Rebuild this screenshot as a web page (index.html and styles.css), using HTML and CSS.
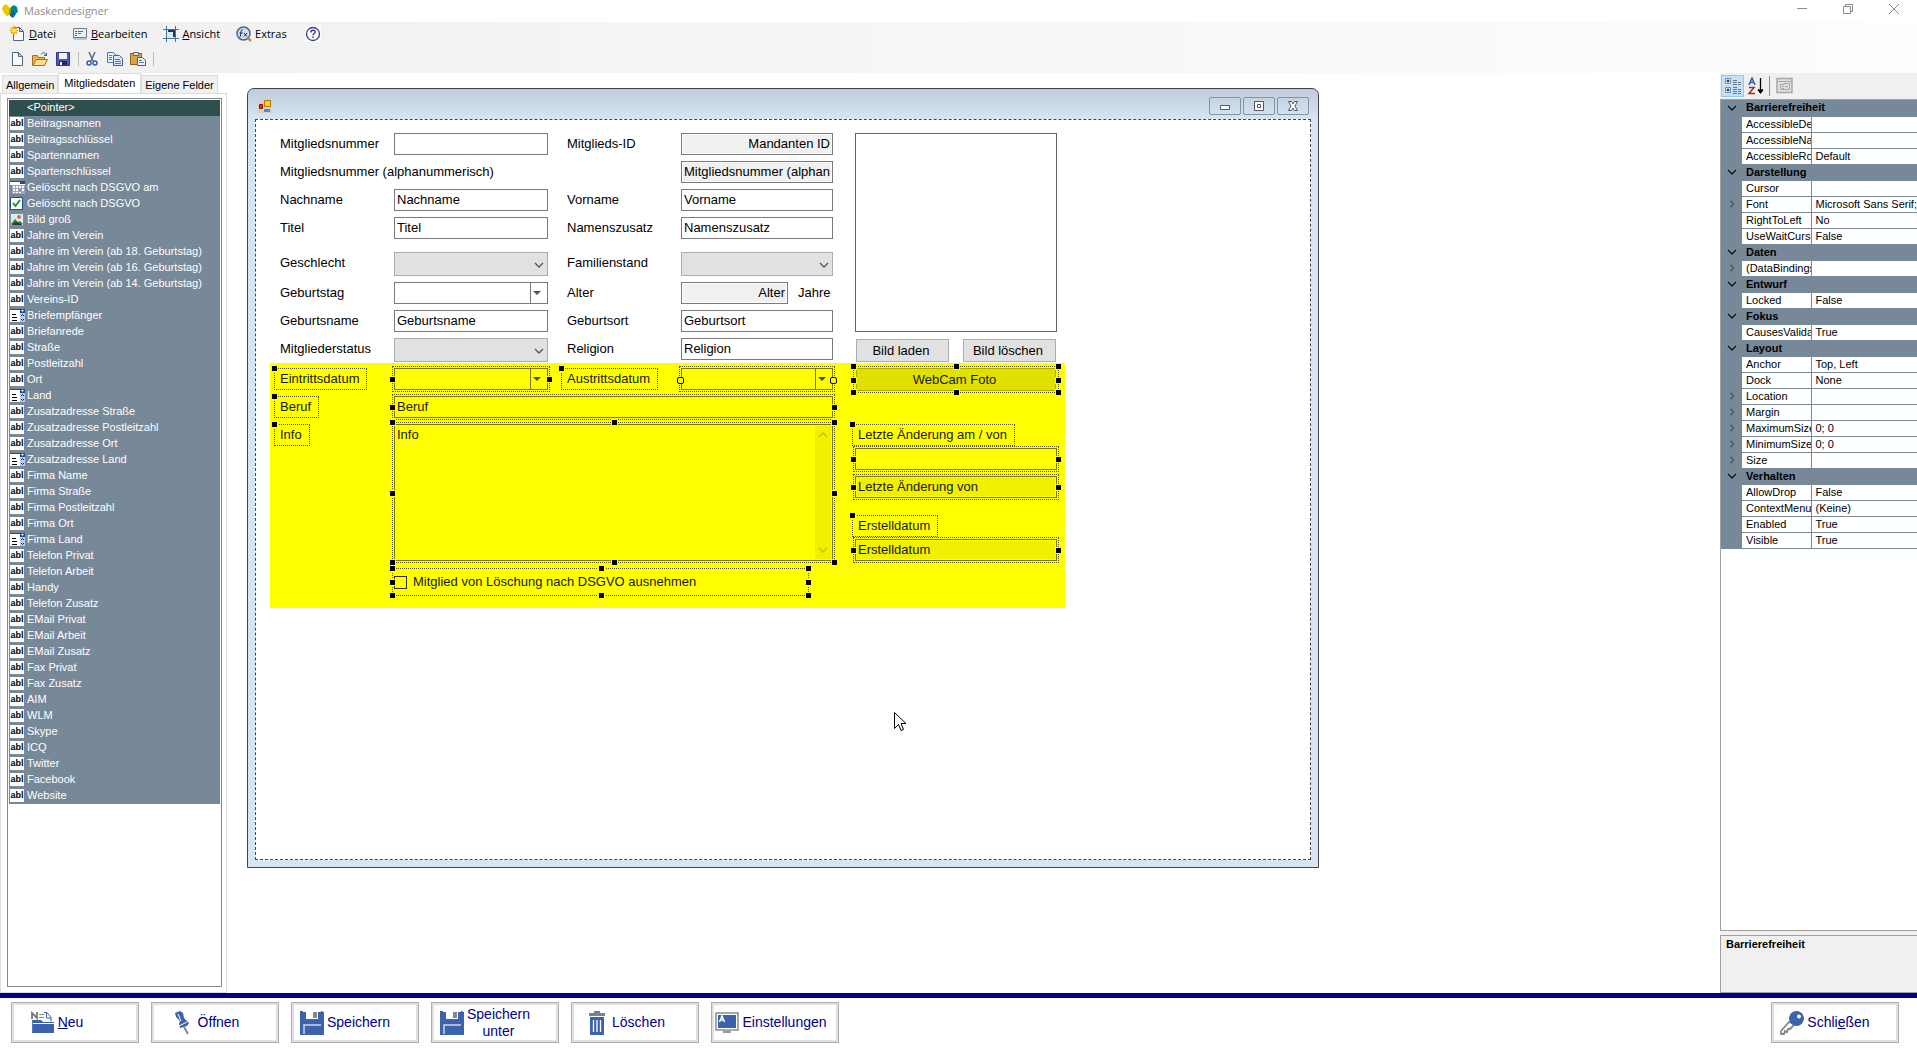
FILE: index.html
```
<!DOCTYPE html>
<html lang="de">
  <head>
    <meta charset="UTF-8" />
    <meta name="viewport" content="width=device-width, initial-scale=1.0" />
    <title>Maskendesigner</title>
    <link rel="stylesheet" href="styles.css">
  </head>
  <body>
    <!-- shared icons -->
    <svg class="sprite" width="0" height="0" aria-hidden="true">
      <symbol id="combo" viewBox="0 0 15 13">
        <path fill="#fff" d="M0 1h10v12H0z" />
        <path fill="#b4cdf0" d="M10 4h5v9h-5z" />
        <path fill="#1f4e87" d="M0 0h15v1H0zM10 1h5v3h-5z" />
        <path fill="#fff" d="M11 1h3l-1.500 2z" />
        <path stroke="#000" d="M2 5.500h4M2 8.500h5M2 11.500h5" />
        <path fill="none" stroke="#223" d="M11 7l1.500-1.500L14 7M11 10l1.500 1.500L14 10" />
      </symbol>
      <symbol id="calendar" viewBox="0 0 15 13">
        <path fill="#fff" d="M0 1h15v12H2V4H0z" />
        <path fill="#1f4e87" d="M0 0h15v1H0zM10 1h5v2h-5z" />
        <path fill="#8fa9d0" d="M2 4h13v9H2z" />
        <path fill="#fff" d="M3 5h2v2H3zM6 5h2v2H6zM9 5h2v2H9zM12 5h2v2h-2zM3 8h2v2H3zM6 8h2v2H6zM12 8h2v2h-2zM3 11h2v1H3zM6 11h2v1H6zM9 11h2v1H9z" />
        <path fill="#e2714c" d="M9 8h2v2H9z" />
      </symbol>
      <symbol id="tick" viewBox="0 0 15 13">
        <path fill="#fff" stroke="#1f4e87" d="M.5.5h12v12H.5z" />
        <path fill="none" stroke="#1d9a31" stroke-width="2" d="M3 6l2.500 3L10 3" />
      </symbol>
      <symbol id="picture" viewBox="0 0 15 13">
        <path fill="#d8ecfb" stroke="#7a8fa5" d="M.5.5h13v12H.5z" />
        <path fill="#3b7d3a" d="M1 11l4-5 3 3 2-1 3 3z" />
        <circle cx="9" cy="4" r="2" fill="#e46b32" />
        <path fill="#333" d="M1 12l5-3 7 3z" />
      </symbol>
      <symbol id="down" viewBox="0 0 10 6">
        <path fill="none" stroke="currentColor" stroke-width="1.300" d="M1 1l4 4 4-4" />
      </symbol>
      <symbol id="right" viewBox="0 0 6 10">
        <path fill="none" stroke="currentColor" stroke-width="1.600" d="M1 1l4 4-4 4" />
      </symbol>
      <symbol id="page" viewBox="0 0 16 16">
        <path fill="#f7fbff" stroke="#55657d" d="M3.500 1.500h6l4 4v9h-10z" />
        <path fill="#c5d5ea" stroke="#55657d" d="M9.500 1.500v4h4z" />
      </symbol>
      <symbol id="disk" viewBox="0 0 24 24">
        <path fill="#3c62ae" d="M1 0h2v9h18V0h1l2 2v22H0V0z" />
        <path fill="#3c62ae" d="M0 8h24v16H0zM0 1h6v9H0zM18 1h6v9h-6z" />
        <path fill="#fff" d="M6 0h12v8H6z" />
        <path fill="#868686" d="M13 1h4v6h-4z" />
        <path fill="none" stroke="#cdd3df" stroke-width="1.500" d="M4 23v-9h17" />
      </symbol>
    </svg>

    <header>
      <div class="titlebar">
        <svg width="16" height="16" viewBox="0 0 16 16">
          <path fill="#f5c400" d="M1 3l3-2 2 2 2 2-1 3 1 4-3 1-3-3-2-4z" />
          <path fill="#00858d" d="M9 4l3-2 3 2 1 5-3 2-4-2z" />
          <path fill="#0a5fa8" d="M8 9l3-1 3 3-3 4-3-2z" />
          <path fill="#6fae2b" d="M7 6l2-2v6l-2 2z" />
        </svg>
        <h1>Maskendesigner</h1>
        <button aria-label="Minimieren"><svg width="12" height="12"><path d="M1 5.500h10" /></svg></button>
        <button aria-label="Wiederherstellen"><svg width="12" height="12"><path d="M1.500 3.500h7v7h-7zM3.500 3V1.500h7v7H9" /></svg></button>
        <button aria-label="Schließen"><svg width="12" height="12"><path d="M1 1l10 10M11 1L1 11" /></svg></button>
      </div>

      <div class="bars">
        <nav class="menu">
          <button>
            <svg width="16" height="16"><use href="#page" /><path stroke="#f5a800" stroke-width="1.500" d="M4 0v9M0 4.500h8M1 1.500l6 6M7 1.500l-6 6" /><circle cx="4" cy="4.500" r="2" fill="#ffe36b" /></svg>
            <span><u>D</u>atei</span>
          </button>
          <button>
            <svg width="16" height="16"><path fill="#e9f1f9" stroke="#6b7c92" d="M1.500 2.500h13v9h-13z" /><path stroke="#54677f" d="M3 5.500h2M6 5.500h5M3 7.500h2M6 7.500h3M3 9.500h2" /><path fill="#b9c6d6" d="M0 12h15v2H2z" /></svg>
            <span><u>B</u>earbeiten</span>
          </button>
          <button>
            <svg width="16" height="16"><path fill="#dfeaf5" d="M4 4h8v8H4z" /><path fill="none" stroke="#3e74a8" d="M0 3.500h16M0 12.500h16M3.500 0v16M12.500 0v16" /><path fill="none" stroke="#17365c" stroke-width="2" d="M5 5h6v6" /></svg>
            <span><u>A</u>nsicht</span>
          </button>
          <button>
            <svg width="16" height="16"><circle cx="7.500" cy="7.500" r="6.500" fill="#cfe0f2" stroke="#4c6a8d" stroke-width="1.500" /><path stroke="#d08b2d" stroke-width="2.500" d="M12 12l3 3" /><path fill="none" stroke="#1b2c44" d="M7 4c-2-.5-2 1-2.500 6l-1 1M3.500 7h3M8 7l3 3.500M11 7l-3 3.500" /></svg>
            <span>Extras</span>
          </button>
          <button class="help" aria-label="Hilfe">
            <svg width="16" height="16"><path fill="#fff" d="M0 0h16v16H0z" /><circle cx="8" cy="8" r="6.500" fill="none" stroke="#3b3b8f" stroke-width="1.300" /><path fill="none" stroke="#3b3b8f" stroke-width="1.500" d="M5.800 6.500c0-3 4.400-3 4.400-.5 0 1.500-2.200 1.500-2.200 3.300M8 10.500V12" /></svg>
          </button>
        </nav>
        <div class="toolbar">
          <button aria-label="Neu"><svg width="16" height="16"><use href="#page" /></svg></button>
          <button aria-label="Öffnen"><svg width="16" height="16"><path fill="#e9b64b" stroke="#9c741f" d="M.5 14.500v-10h5l1 2h6v2" /><path fill="#ffdf8a" stroke="#9c741f" d="M1 14.500l3-6h11.500l-3 6z" /><path fill="none" stroke="#47617f" d="M9 3.500c2-3 4-2 5 .5M12 4.500h2.500V2" /></svg></button>
          <button aria-label="Speichern"><svg width="16" height="16"><path fill="#4c55c4" stroke="#31378f" d="M1.500 1.500h13v13h-13z" /><path fill="#f3f5fc" d="M4 2h8v6H4z" /><path fill="#23284f" d="M4 10h8v4H4z" /><path fill="#fff" d="M5 11h2v3H5z" /></svg></button>
          <i class="sep"></i>
          <button aria-label="Ausschneiden"><svg width="16" height="16"><path stroke="#5b6b80" stroke-width="1.500" d="M5 1l4 9M11 1L7 10" /><circle cx="5" cy="12" r="2" fill="none" stroke="#2f5fb5" stroke-width="1.500" /><circle cx="11" cy="12" r="2" fill="none" stroke="#2f5fb5" stroke-width="1.500" /></svg></button>
          <button aria-label="Kopieren"><svg width="16" height="16"><path fill="#eef5fd" stroke="#5276ad" d="M.5 1.500h6l3 3v7h-9z" /><path fill="#dbe9fa" stroke="#3c64a0" d="M6.500 4.500h6l3 3v7h-9z" /><path stroke="#5276ad" d="M2 4.500h3M2 6.500h3M2 8.500h3M8 8.500h5M8 10.500h6M8 12.500h6" /></svg></button>
          <button aria-label="Einfügen"><svg width="16" height="16"><path fill="#dca24a" stroke="#8c5f1d" d="M.5 2.500h11v11H.5z" /><path fill="#e5e5e5" stroke="#666" d="M3.500 1.500h5v3h-5z" /><path fill="#eef5fd" stroke="#4a5f80" d="M7.500 6.500h5l3 3v5h-8z" /><path stroke="#5276ad" d="M9 9.500h3M9 11.500h5" /></svg></button>
          <i class="sep"></i>
        </div>
      </div>
    </header>

    <main>
      <aside class="toolbox">
        <div class="tabs">
          <button>Allgemein</button>
          <button class="on">Mitgliedsdaten</button>
          <button>Eigene Felder</button>
        </div>
        <div class="tabpage">
          <ul class="fields">
            <li class="on"><i></i>&lt;Pointer&gt;</li>
            <li><b>abl</b>Beitragsnamen</li>
            <li><b>abl</b>Beitragsschlüssel</li>
            <li><b>abl</b>Spartennamen</li>
            <li><b>abl</b>Spartenschlüssel</li>
            <li><svg><use href="#calendar" /></svg>Gelöscht nach DSGVO am</li>
            <li><svg><use href="#tick" /></svg>Gelöscht nach DSGVO</li>
            <li><svg><use href="#picture" /></svg>Bild groß</li>
            <li><b>abl</b>Jahre im Verein</li>
            <li><b>abl</b>Jahre im Verein (ab 18. Geburtstag)</li>
            <li><b>abl</b>Jahre im Verein (ab 16. Geburtstag)</li>
            <li><b>abl</b>Jahre im Verein (ab 14. Geburtstag)</li>
            <li><b>abl</b>Vereins-ID</li>
            <li><svg><use href="#combo" /></svg>Briefempfänger</li>
            <li><b>abl</b>Briefanrede</li>
            <li><b>abl</b>Straße</li>
            <li><b>abl</b>Postleitzahl</li>
            <li><b>abl</b>Ort</li>
            <li><svg><use href="#combo" /></svg>Land</li>
            <li><b>abl</b>Zusatzadresse Straße</li>
            <li><b>abl</b>Zusatzadresse Postleitzahl</li>
            <li><b>abl</b>Zusatzadresse Ort</li>
            <li><svg><use href="#combo" /></svg>Zusatzadresse Land</li>
            <li><b>abl</b>Firma Name</li>
            <li><b>abl</b>Firma Straße</li>
            <li><b>abl</b>Firma Postleitzahl</li>
            <li><b>abl</b>Firma Ort</li>
            <li><svg><use href="#combo" /></svg>Firma Land</li>
            <li><b>abl</b>Telefon Privat</li>
            <li><b>abl</b>Telefon Arbeit</li>
            <li><b>abl</b>Handy</li>
            <li><b>abl</b>Telefon Zusatz</li>
            <li><b>abl</b>EMail Privat</li>
            <li><b>abl</b>EMail Arbeit</li>
            <li><b>abl</b>EMail Zusatz</li>
            <li><b>abl</b>Fax Privat</li>
            <li><b>abl</b>Fax Zusatz</li>
            <li><b>abl</b>AIM</li>
            <li><b>abl</b>WLM</li>
            <li><b>abl</b>Skype</li>
            <li><b>abl</b>ICQ</li>
            <li><b>abl</b>Twitter</li>
            <li><b>abl</b>Facebook</li>
            <li><b>abl</b>Website</li>
          </ul>
        </div>
      </aside>

      <section class="workspace">
        <div class="window">
          <div class="window-title">
            <svg width="14" height="14"><path fill="#d4d0c8" d="M0 0h14v14H0z" /><path fill="#ffc62e" stroke="#b07a00" d="M6.500 1.500h6v6h-6z" /><path fill="#d8352a" stroke="#8c120b" d="M1.500 5.500h3v4h-3z" /><path fill="#4b86e0" d="M6 10h6v3H6z" /></svg>
            <button aria-label="Minimieren"><svg width="12" height="12"><path d="M1.500 5.500h9v4h-9z" /></svg></button>
            <button aria-label="Maximieren"><svg width="12" height="12"><path d="M1.500 1.500h9v9h-9zM4.500 4.500h3v3h-3z" /></svg></button>
            <button aria-label="Schließen"><svg width="12" height="12"><path d="M1.500 1.500h3L6 4l1.500-2.500h3L8 6l2.500 4.500h-3L6 8l-1.500 2.500h-3L4 6z" /></svg></button>
          </div>

          <form class="client">
            <div class="grid top">
              <label for="nr">Mitgliedsnummer</label>
              <input id="nr" type="text">
              <label for="mid">Mitglieds-ID</label>
              <input id="mid" class="narrow right" type="text" value="Mandanten ID" readonly>
              <div class="photo"></div>

              <label class="wide" for="alpha">Mitgliedsnummer (alphanummerisch)</label>
              <input id="alpha" class="narrow" type="text" value="Mitgliedsnummer (alphanummerisch)" readonly>

              <label for="nachname">Nachname</label>
              <input id="nachname" type="text" value="Nachname">
              <label for="vorname">Vorname</label>
              <input id="vorname" class="narrow" type="text" value="Vorname">

              <label for="titel">Titel</label>
              <input id="titel" type="text" value="Titel">
              <label for="zusatz">Namenszusatz</label>
              <input id="zusatz" class="narrow" type="text" value="Namenszusatz">

              <label for="geschlecht">Geschlecht</label>
              <div class="combo"><select id="geschlecht" disabled></select><svg><use href="#down" /></svg></div>
              <label for="stand">Familienstand</label>
              <div class="combo narrow"><select id="stand" disabled></select><svg><use href="#down" /></svg></div>

              <label for="geburtstag">Geburtstag</label>
              <div class="date"><input id="geburtstag" type="text"><button type="button" aria-label="Kalender"></button></div>
              <label for="alter">Alter</label>
              <div class="age"><input id="alter" class="right" type="text" value="Alter" readonly><span>Jahre</span></div>

              <label for="gname">Geburtsname</label>
              <input id="gname" type="text" value="Geburtsname">
              <label for="gort">Geburtsort</label>
              <input id="gort" class="narrow" type="text" value="Geburtsort">

              <label for="status">Mitgliederstatus</label>
              <div class="combo"><select id="status" disabled></select><svg><use href="#down" /></svg></div>
              <label for="religion">Religion</label>
              <input id="religion" class="narrow" type="text" value="Religion">
              <div class="photo-buttons">
                <button type="button">Bild laden</button>
                <button type="button">Bild löschen</button>
              </div>
            </div>

            <!-- selected controls -->
            <div class="grid marked">
              <label class="tag" for="eintritt">Eintrittsdatum<i class="grip t l"></i></label>
              <div class="sel">
                <div class="date"><input id="eintritt" type="text"><button type="button" aria-label="Kalender"></button></div>
                <i class="grip m l"></i><i class="grip m r"></i>
              </div>
              <label class="tag" for="austritt">Austrittsdatum<i class="grip t l"></i></label>
              <div class="sel primary">
                <div class="date"><input id="austritt" type="text"><button type="button" aria-label="Kalender"></button></div>
                <i class="grip m l"></i><i class="grip m r"></i>
              </div>
              <div class="sel side">
                <button class="webcam" type="button">WebCam Foto</button>
                <i class="grip t l"></i><i class="grip t c"></i><i class="grip t r"></i>
                <i class="grip m l"></i><i class="grip m r"></i>
                <i class="grip b l"></i><i class="grip b c"></i><i class="grip b r"></i>
              </div>

              <label class="tag first" for="beruf">Beruf<i class="grip t l"></i></label>
              <div class="sel span">
                <input id="beruf" type="text" value="Beruf">
                <i class="grip m l"></i><i class="grip m r"></i>
              </div>

              <label class="tag first" for="info">Info<i class="grip t l"></i></label>
              <div class="sel span info">
                <textarea id="info">Info</textarea>
                <span class="scroll"><svg class="up"><use href="#down" /></svg><svg><use href="#down" /></svg></span>
                <i class="grip t l"></i><i class="grip t c"></i><i class="grip t r"></i>
                <i class="grip m l"></i><i class="grip m r"></i>
                <i class="grip b l"></i><i class="grip b c"></i><i class="grip b r"></i>
              </div>
              <div class="changes">
                <label class="tag" for="am">Letzte Änderung am / von<i class="grip t l"></i></label>
                <div class="sel side"><input id="am" type="text"><i class="grip m l"></i><i class="grip m r"></i></div>
                <div class="sel side second"><input type="text" value="Letzte Änderung von" aria-label="Letzte Änderung von" readonly><i class="grip m l"></i><i class="grip m r"></i></div>
                <label class="tag" for="erstellt">Erstelldatum<i class="grip t l"></i></label>
                <div class="sel side"><input id="erstellt" type="text" value="Erstelldatum" readonly><i class="grip m l"></i><i class="grip m r"></i></div>
              </div>

              <div class="sel check">
                <input id="dsgvo" type="checkbox">
                <label for="dsgvo">Mitglied von Löschung nach DSGVO ausnehmen</label>
                <i class="grip t l"></i><i class="grip t c"></i><i class="grip t r"></i>
                <i class="grip m l"></i><i class="grip m r"></i>
                <i class="grip b l"></i><i class="grip b c"></i><i class="grip b r"></i>
              </div>
            </div>
          </form>
        </div>
        <svg class="cursor" width="12" height="20"><path fill="#fff" stroke="#000" d="M.5.5v16l4-4 2.500 6 2.500-1-2.500-6h5z" /></svg>
      </section>

      <aside class="props">
        <div class="props-bar">
          <button class="on" aria-label="Nach Kategorien"><svg width="18" height="18"><path fill="#fff" stroke="#6c8fb8" d="M1.500 1.500h5v5h-5zM1.500 10.500h5v5h-5z" /><path stroke="#000" d="M2.500 4h3M4 2.500v3M2.500 13h3M4 11.500v3" /><path stroke="#6b7787" stroke-dasharray="4 1" d="M9 3.500h4M9 5.500h8M9 7.500h8M9 10.500h4M9 12.500h8M9 14.500h8M9 16.500h8" /></svg></button>
          <button aria-label="Alphabetisch"><svg width="18" height="18"><path fill="none" stroke="#3458b0" stroke-width="1.500" d="M2 8l3-7 3 7M3 5.500h4" /><path fill="none" stroke="#a03030" stroke-width="1.500" d="M2 10.500h5l-5 6h6" /><path stroke="#000" stroke-width="1.300" d="M13.500 1v15M11 12.500l2.500 3.500 2.500-3.500" /></svg></button>
          <i class="sep"></i>
          <button aria-label="Eigenschaftenseiten" disabled><svg width="18" height="18"><path fill="#e0e0e0" stroke="#a8a8a8" stroke-width="1.500" d="M1 1.500h15v14H1z" /><path fill="none" stroke="#a8a8a8" d="M1 4.500h15M4.500 7.500h4v-1h5v6h-9zM6 9.500h2M9 9.500h3M6 11.500h2" /></svg></button>
        </div>
        <div class="props-grid">
          <table>
            <colgroup><col class="gutter"><col class="name"><col></colgroup>
            <tbody>
              <tr class="cat"><td><svg><use href="#down" /></svg></td><th colspan="2">Barrierefreiheit</th></tr>
              <tr><td></td><th>AccessibleDescription</th><td></td></tr>
              <tr><td></td><th>AccessibleName</th><td></td></tr>
              <tr><td></td><th>AccessibleRole</th><td>Default</td></tr>
              <tr class="cat"><td><svg><use href="#down" /></svg></td><th colspan="2">Darstellung</th></tr>
              <tr><td></td><th>Cursor</th><td></td></tr>
              <tr><td><svg><use href="#right" /></svg></td><th>Font</th><td>Microsoft Sans Serif; 9,75pt</td></tr>
              <tr><td></td><th>RightToLeft</th><td>No</td></tr>
              <tr><td></td><th>UseWaitCursor</th><td>False</td></tr>
              <tr class="cat"><td><svg><use href="#down" /></svg></td><th colspan="2">Daten</th></tr>
              <tr><td><svg><use href="#right" /></svg></td><th>(DataBindings)</th><td></td></tr>
              <tr class="cat"><td><svg><use href="#down" /></svg></td><th colspan="2">Entwurf</th></tr>
              <tr><td></td><th>Locked</th><td>False</td></tr>
              <tr class="cat"><td><svg><use href="#down" /></svg></td><th colspan="2">Fokus</th></tr>
              <tr><td></td><th>CausesValidation</th><td>True</td></tr>
              <tr class="cat"><td><svg><use href="#down" /></svg></td><th colspan="2">Layout</th></tr>
              <tr><td></td><th>Anchor</th><td>Top, Left</td></tr>
              <tr><td></td><th>Dock</th><td>None</td></tr>
              <tr><td><svg><use href="#right" /></svg></td><th>Location</th><td></td></tr>
              <tr><td><svg><use href="#right" /></svg></td><th>Margin</th><td></td></tr>
              <tr><td><svg><use href="#right" /></svg></td><th>MaximumSize</th><td>0; 0</td></tr>
              <tr><td><svg><use href="#right" /></svg></td><th>MinimumSize</th><td>0; 0</td></tr>
              <tr><td><svg><use href="#right" /></svg></td><th>Size</th><td></td></tr>
              <tr class="cat"><td><svg><use href="#down" /></svg></td><th colspan="2">Verhalten</th></tr>
              <tr><td></td><th>AllowDrop</th><td>False</td></tr>
              <tr><td></td><th>ContextMenu</th><td>(Keine)</td></tr>
              <tr><td></td><th>Enabled</th><td>True</td></tr>
              <tr><td></td><th>Visible</th><td>True</td></tr>
            </tbody>
          </table>
        </div>
        <div class="props-help">Barrierefreiheit</div>
      </aside>
    </main>

    <footer>
      <button class="short">
        <svg width="24" height="24"><path fill="none" stroke="#777" stroke-width="1.800" d="M1 8V2l5 5V1" /><path stroke="#888" d="M8 3.500h5M8 6.500h5" /><path fill="#fff" stroke="#3c62ae" d="M13 1.500h3l4 5v4" /><path fill="none" stroke="#3c62ae" d="M15.500 2v5h5" /><path fill="#3c62ae" d="M1 9h9l2 2h11v11H1z" /><path stroke="#fff" d="M1 12.500h22" /><path stroke="#888" stroke-dasharray="1 1" d="M1.500 10v11" /></svg>
        <span><u>N</u>eu</span>
      </button>
      <button>
        <svg width="24" height="24"><path fill="#3c62ae" d="M4 2l5-2 3 2 1 5 5 5-2 3-7 2-1-4 1-3-4-4z" /><path stroke="#fff" d="M7 3l3 7M8 15l8-4" /><path stroke="#868686" stroke-width="2" d="M13 16l4 7" /></svg>
        <span>Öffnen</span>
      </button>
      <button><svg width="24" height="24"><use href="#disk" /></svg><span>Speichern</span></button>
      <button><svg width="24" height="24"><use href="#disk" /></svg><span>Speichern<br>unter</span></button>
      <button>
        <svg width="24" height="24"><path fill="#7d8088" d="M4 2h5V0h6v2h5v3H4z" /><path fill="#3c62ae" d="M5 6h14v18H5z" /><path stroke="#fff" stroke-width="1.300" d="M8.500 9v12M12 9v12M15.500 9v12" /></svg>
        <span>Löschen</span>
      </button>
      <button class="long">
        <svg width="24" height="24"><path fill="#fff" stroke="#8a8a8a" stroke-width="1.500" d="M1 2h22v17H1z" /><path fill="#3c62ae" d="M3 4h18v13H3z" /><path fill="#999" d="M8 20h8v2H8z" /><path fill="none" stroke="#fff" stroke-width="1.500" d="M4.500 11L7 5l2.500 6M5.500 9h3" /></svg>
        <span>Einstellungen</span>
      </button>
      <button class="close">
        <svg width="24" height="24"><path fill="none" stroke="#868686" stroke-width="1.800" d="M14 12l-5-1-8 9v3h3l1-3 2 1 1-3h2l4-4" /><circle cx="16.500" cy="7.500" r="7.500" fill="#3c62ae" /><circle cx="19" cy="5.500" r="2" fill="#fff" /></svg>
        <span>Schli<u>e</u>ßen</span>
      </button>
    </footer>
  </body>
</html>
```
FILE: styles.css
```
* {
  box-sizing: border-box;
  margin: 0;
  padding: 0;
}
body {
  display: flex;
  flex-direction: column;
  min-height: 100vh;
  background: #fff;
  color: #000;
  font: 11px/16px "Liberation Sans", Arial, sans-serif;
}
button,
input,
select,
textarea {
  font: inherit;
  color: inherit;
}
button {
  border: 0;
  background: none;
}
svg {
  flex: none;
}
.sprite {
  position: absolute;
}

/* title, menu, toolbar */
.titlebar {
  display: flex;
  align-items: center;
  height: 22px;
  padding-left: 2px;
  color: #8c8c8c;
}
.titlebar h1 {
  flex: 1;
  margin-left: 6px;
  font: 11px/22px "Open Sans", sans-serif;
}
.titlebar button {
  width: 46px;
  height: 18px;
}
.titlebar button path {
  fill: none;
  stroke: #8c8c8c;
}
.bars {
  height: 51px;
  background: linear-gradient(90deg, #f0f0f0, #fdfdfd);
}
.menu {
  display: flex;
  gap: 16px;
  height: 24px;
  padding-left: 10px;
  font: 11px/24px "Open Sans", sans-serif;
}
.menu button {
  display: flex;
  align-items: center;
  gap: 3px;
}
.menu .help {
  margin-left: 2px;
}
.toolbar {
  display: flex;
  align-items: center;
  height: 26px;
  padding-left: 5px;
}
.toolbar button {
  width: 23px;
  height: 22px;
}
.toolbar svg {
  display: block;
  margin: auto;
}
.toolbar .sep {
  width: 1px;
  height: 14px;
  margin: 0 1px 0 4px;
  background: #bdbdbd;
}

main {
  display: flex;
  flex: 1;
}

/* toolbox */
.toolbox {
  display: flex;
  flex-direction: column;
  flex: none;
  width: 228px;
}
.tabs {
  display: flex;
  align-items: flex-end;
  height: 20px;
  padding-left: 2px;
}
.tabs button {
  height: 18px;
  padding: 0 3px;
  border: 1px solid #dcdcdc;
  border-bottom: 0;
  background: #f0f0f0;
}
.tabs .on {
  height: 20px;
  padding: 0 5px 2px;
  background: #fff;
}
.tabpage {
  display: flex;
  flex: 1;
  margin-right: 1px;
  padding: 4px 4px 5px 6px;
  border: 1px solid #dcdcdc;
}
.fields {
  flex: 1;
  padding: 1px;
  border: 1px solid #828790;
  list-style: none;
}
.fields li {
  display: flex;
  align-items: center;
  height: 16px;
  padding: 0 0 2px 1px;
  background: #778899;
  color: #fff;
}
.fields .on {
  background: #2f4f4f;
}
.fields i,
.fields b,
.fields svg {
  flex: none;
  width: 14px;
  height: 13px;
  margin-right: 3px;
}
.fields svg {
  width: 15px;
  margin-right: 2px;
}
.fields b {
  background: #fff;
  color: #000;
  font-size: 9px;
  line-height: 13px;
  text-align: center;
}

/* design surface */
.workspace {
  position: relative;
  flex: 1;
  padding: 15px 19px;
}
.window {
  display: flex;
  flex-direction: column;
  width: 1072px;
  min-height: 780px;
  padding: 0 7px 7px;
  border: 1px solid #444;
  border-radius: 7px 7px 0 0;
  background: linear-gradient(#bfcddb, #d7e4f2 30px);
}
.window-title {
  display: flex;
  align-items: center;
  gap: 2px;
  height: 30px;
  padding: 8px 2px 4px 3px;
}
.window-title > svg {
  margin-right: auto;
}
.window-title button {
  display: flex;
  align-items: center;
  justify-content: center;
  width: 32px;
  height: 18px;
  border: 1px solid #8591ae;
  border-radius: 2px;
}
.window-title button path {
  fill: #fff;
  stroke: #535666;
}
.client {
  flex: 1;
  padding: 13px 0 0 14px;
  border: 1px dashed #444;
  background: #fff;
  font-size: 13px;
  line-height: 22px;
}
.grid {
  display: grid;
  grid-template-columns: 120px 167px 120px 171px 205px;
  width: 795px;
  padding-left: 4px;
}
.grid.top {
  grid-template-rows: 28px 28px 28px 35px 30px 28px 28px 25px;
  align-items: start;
}
.grid label {
  padding-left: 6px;
}
.grid .wide {
  grid-column: span 3;
}
.grid input[type="text"],
.combo,
.date {
  width: 154px;
  height: 22px;
}
.grid input[type="text"] {
  padding: 0 2px;
  border: 1px solid #7a7a7a;
  background: transparent;
}
.grid .narrow[type="text"],
.combo.narrow {
  width: 152px;
}
.grid input[readonly] {
  background: #f0f0f0;
  box-shadow: inset 0 0 0 1px #fff;
}
.grid .right {
  text-align: right;
}
.photo {
  grid-area: 1 / 5 / 8 / 6;
  align-self: stretch;
  margin: 0 0 6px 3px;
  width: 202px;
  border: 1px solid #646464;
}
.combo {
  position: relative;
}
.combo select {
  display: block;
  width: 100%;
  height: 24px;
  border: 1px solid #adadad;
  background: #e1e1e1;
  opacity: 1;
  appearance: none;
}
.combo svg {
  position: absolute;
  right: 4px;
  top: 10px;
  width: 10px;
  height: 6px;
  color: #555;
}
.date {
  display: flex;
  border: 1px solid #7a7a7a;
}
.grid .date input {
  flex: 1;
  width: auto;
  min-width: 0;
  height: 20px;
  border: 0;
}
.date button {
  width: 17px;
  border-left: 1px solid #7a7a7a;
}
.date button::before {
  content: "";
  display: block;
  width: 0;
  margin-left: 2px;
  border: 4px solid transparent;
  border-top-color: #44597a;
  border-bottom: 0;
}
.age {
  display: flex;
  gap: 10px;
}
.grid .age input {
  width: 107px;
}
.photo-buttons {
  display: flex;
  justify-content: space-between;
  width: 202px;
  margin-left: 3px;
  padding: 1px 1px 0;
}
.photo-buttons button,
.webcam {
  width: 93px;
  height: 23px;
  padding: 0 3px 2px 0;
  border: 1px solid #adadad;
  background: #e1e1e1;
}

/* selected controls, highlighted yellow */
.marked {
  grid-template-rows: 28px 28px 144px 28px;
  align-items: start;
  padding: 5px 0 12px 4px;
  background: #ff0;
  color: #1a1a00;
}
.tag {
  position: relative;
  justify-self: start;
  height: 22px;
  padding-right: 8px;
  line-height: 22px;
}
.tag.first {
  grid-column: 1;
}
.sel {
  position: relative;
  width: 154px;
}
.tag::before,
.sel::before {
  content: "";
  position: absolute;
  inset: 0;
  border: 1px dotted #555500;
  pointer-events: none;
}
.sel::before {
  inset: -2px;
}
.marked .sel > input[type="text"],
.marked .sel > .date {
  display: flex;
  width: 100%;
  border-color: #7a7a00;
}
.marked .date button {
  border-color: #7a7a00;
}
.marked .date button::before {
  border-top-color: #445900;
}
.marked input[readonly] {
  background: #f0f000;
  box-shadow: inset 0 0 0 1px #ff0;
}
.sel.primary {
  width: 152px;
}
.sel.span {
  grid-column: 2 / 5;
  width: 439px;
}
.sel.side {
  width: 202px;
  margin-left: 3px;
}
.webcam {
  display: block;
  width: 200px;
  margin: 0 auto;
  border-color: #adad00;
  background: #e1e100;
}
.info textarea {
  display: block;
  width: 100%;
  height: 137px;
  padding: 0 2px;
  border: 1px solid #7a7a00;
  background: transparent;
  line-height: 20px;
  overflow: hidden;
  resize: none;
}
.scroll {
  position: absolute;
  inset: 2px 2px 2px auto;
  display: flex;
  flex-direction: column;
  justify-content: space-between;
  align-items: center;
  width: 16px;
  padding: 6px 0;
  background: #f0f000;
  color: #bfbf00;
}
.scroll svg {
  width: 10px;
  height: 6px;
}
.scroll .up {
  transform: rotate(180deg);
}
.changes {
  display: flex;
  flex-direction: column;
  align-items: flex-start;
  gap: 2px;
}
.changes .second {
  margin-top: 4px;
  margin-bottom: 15px;
}
.sel.check {
  grid-column: 2 / 5;
  display: flex;
  align-items: center;
  width: 413px;
  height: 24px;
  margin-top: 2px;
}
.check input {
  width: 13px;
  height: 13px;
  border: 1px solid #333300;
  appearance: none;
}
.grip {
  position: absolute;
  width: 5px;
  height: 5px;
  background: #000;
  box-shadow: 0 0 0 1px #ff0;
}
.grip.t { top: -4px; }
.grip.m { top: calc(50% - 2px); }
.grip.b { bottom: -4px; }
.grip.l { left: -4px; }
.grip.c { left: calc(50% - 2px); }
.grip.r { right: -4px; }
.tag .grip.t { top: -2px; }
.tag .grip.l { left: -2px; }
.primary .grip {
  width: 7px;
  height: 7px;
  border: 1px solid #000;
  border-radius: 2px;
  background: #ff0;
  box-shadow: none;
}
.cursor {
  position: absolute;
  left: 666px;
  top: 639px;
}

/* properties */
.props {
  display: flex;
  flex-direction: column;
  flex: none;
  width: 197px;
  background: #f0f0f0;
  overflow: hidden;
}
.props-bar {
  display: flex;
  align-items: center;
  height: 26px;
  padding-left: 1px;
}
.props-bar button {
  display: flex;
  align-items: center;
  justify-content: center;
  width: 23px;
  height: 22px;
}
.props-bar .on {
  border: 1px solid #90c8f6;
  background: #c4e1f7;
}
.props-bar .sep {
  width: 1px;
  height: 20px;
  margin: 0 3px 0 2px;
  background: #8c8c8c;
}
.props-grid {
  flex: 1;
  border: 1px solid #a0a0a0;
  border-right: 0;
  background: #fff;
}
.props table {
  width: 100%;
  table-layout: fixed;
  border-collapse: collapse;
}
.props .gutter {
  width: 21px;
}
.props .name {
  width: 69px;
}
.props tr {
  height: 16px;
}
.props td,
.props th {
  height: 16px;
  padding: 0 0 0 4px;
  border-bottom: 1px solid #778899;
  font-weight: normal;
  line-height: 15px;
  text-align: left;
  white-space: nowrap;
  overflow: hidden;
}
.props th + td {
  border-left: 1px solid #778899;
}
.props td:first-child {
  padding: 0;
  background: #778899;
  color: #4b545d;
  text-align: center;
}
.props .cat th {
  background: #778899;
  font-weight: bold;
}
.props td svg {
  display: block;
  width: 10px;
  height: 8px;
  margin: 0 auto;
}
.props .cat td:first-child {
  color: #111;
}
.props-help {
  height: 58px;
  margin-top: 4px;
  padding: 0 5px;
  border: 1px solid #a0a0a0;
  border-right: 0;
  font-weight: bold;
}

/* bottom buttons */
footer {
  display: flex;
  gap: 12px;
  padding: 4px 18px 5px 11px;
  border-top: 5px solid #00008b;
  color: #00008b;
  font-size: 14px;
  line-height: 17px;
}
footer button {
  display: flex;
  align-items: center;
  justify-content: center;
  gap: 3px;
  width: 128px;
  height: 41px;
  padding-right: 20px;
  border: 1px solid #adadad;
  box-shadow: inset 0 0 0 2px #e1e1e1;
}
footer .short {
  padding-right: 36px;
}
footer .long {
  padding-right: 8px;
}
footer .close {
  margin-left: auto;
}
```
